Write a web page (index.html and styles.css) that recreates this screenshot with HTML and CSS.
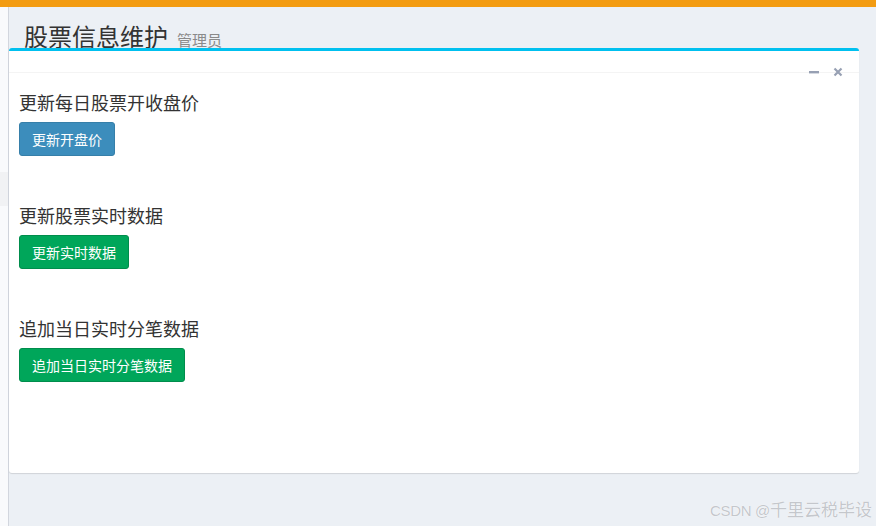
FILE: index.html
```html
<!DOCTYPE html>
<html lang="zh-CN">
<head>
<meta charset="utf-8">
<title>股票信息维护</title>
<link rel="stylesheet" href="styles.css">
</head>
<body>
<div class="topbar"></div>
<div class="layout">
  <aside class="sidebar"><div class="side-item"></div></aside>
  <main class="content">
    <header class="content-header">
      <h1 class="page-title">股票信息维护<small class="subtitle">管理员</small></h1>
    </header>
    <section class="box">
      <div class="box-header">
        <div class="box-tools">
          <svg class="tool" width="12" height="10" viewBox="0 0 12 10"><rect x="1" y="4" width="10" height="2.4" fill="#97a0b3"/></svg>
          <svg class="tool" width="10" height="10" viewBox="0 0 10 10"><path d="M1.5 1.5 L8.5 8.5 M8.5 1.5 L1.5 8.5" stroke="#97a0b3" stroke-width="2.2" stroke-linecap="butt"/></svg>
        </div>
      </div>
      <div class="box-body">
        <div class="section">
          <h4 class="sec-title">更新每日股票开收盘价</h4>
          <button class="btn btn-primary">更新开盘价</button>
        </div>
        <div class="section">
          <h4 class="sec-title">更新股票实时数据</h4>
          <button class="btn btn-success">更新实时数据</button>
        </div>
        <div class="section">
          <h4 class="sec-title">追加当日实时分笔数据</h4>
          <button class="btn btn-success">追加当日实时分笔数据</button>
        </div>
      </div>
    </section>
  </main>
</div>
<div class="watermark"><span class="wm-latin">CSDN @</span>千里云税毕设</div>
</body>
</html>
```
FILE: styles.css
```css
html, body {
  margin: 0;
  padding: 0;
}
body {
  background: #ecf0f5;
  font-family: "Noto Sans CJK SC", "Liberation Sans", sans-serif;
  color: #333;
  height: 526px;
  overflow: hidden;
  position: relative;
}
.topbar {
  height: 7px;
  background: #f39c12;
}
.layout {
  display: flex;
  height: 519px;
}
.sidebar {
  width: 8px;
  background: #f9fafc;
  border-right: 1px solid #d2d6de;
  flex: none;
}
.side-item {
  margin-top: 165px;
  height: 34px;
  background: #f1f2f4;
}
.content {
  flex: 1;
  min-width: 0;
}
.content-header {
  height: 41px;
  box-sizing: border-box;
  padding: 17px 15px 0;
}
.page-title {
  margin: 0;
  font-size: 24px;
  line-height: 24px;
  font-weight: 400;
  color: #333;
  white-space: nowrap;
}
.subtitle {
  font-size: 15px;
  color: #8a8a8a;
  margin-left: 9px;
  font-weight: 400;
}
.box {
  position: relative;
  margin-right: 17px;
  height: 425px;
  box-sizing: border-box;
  background: #fff;
  border-top: 3px solid #00c0ef;
  border-radius: 3px;
  box-shadow: 0 1px 1px rgba(0, 0, 0, 0.12);
}
.box-header {
  position: relative;
  height: 21px;
  border-bottom: 1px solid #f4f4f4;
}
.box-tools {
  position: absolute;
  right: 16px;
  top: 16px;
  display: flex;
  align-items: center;
  gap: 13px;
}
.tool {
  display: block;
}
.box-body {
  padding: 19px 10px 10px;
}
.section {
  margin-bottom: 49px;
}
.sec-title {
  margin: 0 0 10px;
  font-size: 18px;
  line-height: 20px;
  font-weight: 400;
  color: #333;
}
.btn {
  display: inline-block;
  font-family: inherit;
  font-size: 14px;
  line-height: 20px;
  padding: 6px 12px;
  border: 1px solid transparent;
  border-radius: 3px;
  color: #fff;
  cursor: pointer;
  height: 34px;
  box-sizing: border-box;
}
.btn-primary {
  background: #3c8dbc;
  border-color: #367fa9;
}
.btn-success {
  background: #00a65a;
  border-color: #008d4c;
}
.watermark {
  position: absolute;
  right: 4px;
  bottom: 5px;
  font-size: 17px;
  line-height: 20px;
  color: #c4c7cc;
  text-shadow: 0 0 1px #fff, 0 0 1px #fff;
  white-space: nowrap;
}
.wm-latin {
  font-family: "Liberation Sans", sans-serif;
  font-size: 15px;
  letter-spacing: -0.3px;
}
```
